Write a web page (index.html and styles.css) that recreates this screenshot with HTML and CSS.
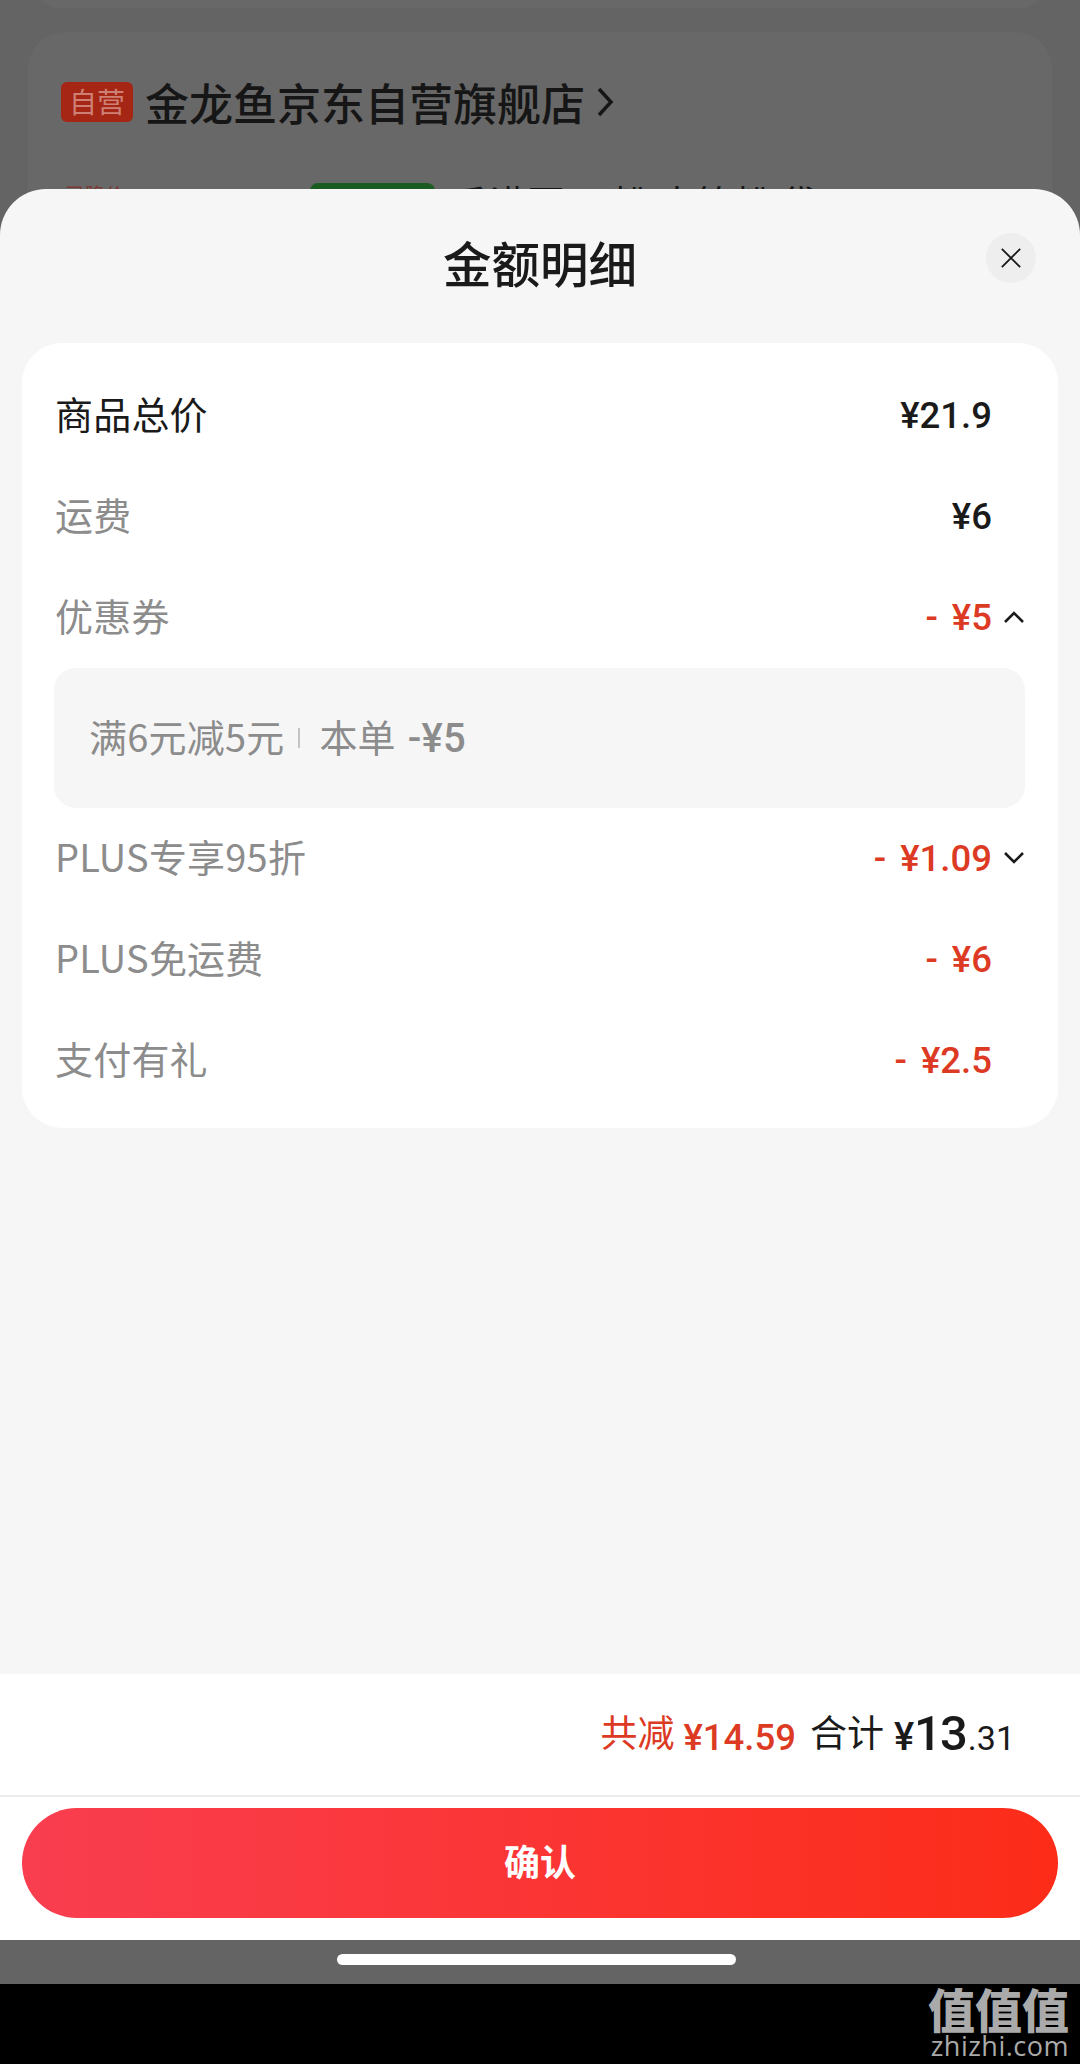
FILE: index.html
```html
<!DOCTYPE html>
<html lang="zh-CN">
<head>
  <meta charset="UTF-8">
  <title>金额明细</title>
  <meta name="viewport" content="width=device-width, initial-scale=1.0">
  <link rel="stylesheet" href="styles.css">
</head>
<body>
  <div class="screen">
    <!-- dimmed order page behind the sheet -->
    <div class="backdrop">
      <div class="bg-card bg-card-top"></div>
      <div class="bg-card">
        <div class="shop-row">
          <span class="shop-badge">自营</span>
          <span class="shop-name">金龙鱼京东自营旗舰店</span>
          <svg class="shop-arrow" viewBox="0 0 18 32"><path d="M3 3l12 13L3 29"/></svg>
        </div>
        <div class="goods-row">
          <span class="goods-tag">已降价</span>
          <span class="goods-green"></span>
          <span class="goods-name">香满园 面粉 中筋粉 袋</span>
        </div>
      </div>
    </div>

    <div class="sheet">
      <header class="sheet-head">
        <h1 class="sheet-title">金额明细</h1>
        <button class="close-btn">
          <svg viewBox="0 0 24 24"><path d="M2 2l20 20M22 2L2 22"/></svg>
        </button>
      </header>

      <section class="detail-card">
        <div class="row">
          <span class="row-label dark">商品总价</span>
          <span class="row-amount">¥21.9</span>
          <span class="row-arrow"></span>
        </div>
        <div class="row">
          <span class="row-label">运费</span>
          <span class="row-amount">¥6</span>
          <span class="row-arrow"></span>
        </div>
        <div class="row">
          <span class="row-label">优惠券</span>
          <span class="row-amount red">- ¥5</span>
          <svg class="row-arrow" viewBox="0 0 22 14"><path d="M2 12l9-9 9 9"/></svg>
        </div>
        <div class="coupon-box">
          <span>满6元减5元</span>
          <i class="coupon-sep"></i>
          <span>本单</span>
          <b class="coupon-off">-¥5</b>
        </div>
        <div class="row">
          <span class="row-label">PLUS专享95折</span>
          <span class="row-amount red">- ¥1.09</span>
          <svg class="row-arrow" viewBox="0 0 22 14"><path d="M2 2l9 9 9-9"/></svg>
        </div>
        <div class="row">
          <span class="row-label">PLUS免运费</span>
          <span class="row-amount red">- ¥6</span>
          <span class="row-arrow"></span>
        </div>
        <div class="row">
          <span class="row-label">支付有礼</span>
          <span class="row-amount red">- ¥2.5</span>
          <span class="row-arrow"></span>
        </div>
      </section>

      <footer class="sheet-foot">
        <div class="summary">
          <span class="sum-label red">共减</span>
          <span class="sum-off red">¥14.59</span>
          <span class="sum-label sum-total-label">合计</span>
          <span class="sum-total"><span class="yen">¥</span><span class="int">13</span><span class="dec">.31</span></span>
        </div>
        <div class="confirm-wrap">
          <button class="confirm-btn">确认</button>
        </div>
      </footer>
    </div>

    <div class="home-bar"></div>
  </div>

  <div class="watermark">
    <div class="wm-logo">值值值</div>
    <div class="wm-url">zhizhi.com</div>
  </div>
</body>
</html>
```

FILE: styles.css
```css
* {
  box-sizing: border-box;
}
body {
  margin: 0;
  background: #000;
  color: #1a1a1a;
  font-family: "Noto Sans CJK SC", "Noto Sans", sans-serif;
}
.screen {
  position: relative;
  height: 1984px;
  background: #646464;
  overflow: hidden;
}
.backdrop {
  display: flex;
  flex-direction: column;
  gap: 24px;
  padding: 0 28px;
  margin-top: -60px;
}
.bg-card {
  background: #686868;
  border-radius: 36px;
  padding: 0 33px;
}
.bg-card-top {
  height: 68px;
}
.shop-row {
  display: flex;
  align-items: center;
  height: 127px;
  padding-top: 13px;
}
.shop-badge {
  width: 72px;
  height: 40px;
  border-radius: 6px;
  background: #a52614;
  color: #cf8075;
  font-size: 28px;
  line-height: 38px;
  text-align: center;
}
.shop-name {
  margin-left: 12px;
  font-size: 44px;
  font-weight: 500;
  color: #161616;
  white-space: nowrap;
}
.shop-arrow {
  width: 18px;
  height: 32px;
  margin-left: 11px;
}
.shop-arrow path {
  fill: none;
  stroke: #161616;
  stroke-width: 3.5;
}
.goods-row {
  display: flex;
  align-items: flex-start;
  height: 120px;
  padding-top: 24px;
}
.goods-tag {
  width: 249px;
  margin-top: -3px;
  padding-left: 4px;
  font-size: 20px;
  color: #7c3a36;
}
.goods-green {
  width: 125px;
  height: 60px;
  border-radius: 8px;
  background: #1b5c22;
}
.goods-name {
  margin-left: 16px;
  font-size: 38px;
  line-height: 44px;
  margin-top: -3px;
  color: #161616;
}

/* bottom sheet */
.sheet {
  position: absolute;
  top: 189px;
  left: 0;
  right: 0;
  bottom: 44px;
  display: flex;
  flex-direction: column;
  background: #f6f6f6;
  border-radius: 46px 46px 0 0;
  overflow: hidden;
}
.sheet-head {
  position: relative;
  height: 154px;
  flex: none;
  display: flex;
  align-items: center;
  justify-content: center;
  padding-bottom: 8px;
}
.sheet-title {
  margin: 0;
  font-size: 48.5px;
  font-weight: 500;
  color: #1a1a1a;
}
.close-btn {
  position: absolute;
  top: 44px;
  right: 44px;
  width: 50px;
  height: 50px;
  padding: 14px;
  border: none;
  border-radius: 50%;
  background: #eeeeee;
}
.close-btn svg {
  display: block;
  width: 100%;
  height: 100%;
}
.close-btn path {
  fill: none;
  stroke: #1a1a1a;
  stroke-width: 2;
}

.detail-card {
  margin: 0 22px;
  padding: 22px 33px 17px 33px;
  background: #fff;
  border-radius: 40px;
}
.row {
  display: flex;
  align-items: center;
  height: 101px;
}
.row-label {
  flex: 1;
  padding-bottom: 6px;
  font-size: 38px;
  letter-spacing: .2px;
  color: #8c8c8c;
}
.row-label.dark {
  color: #1a1a1a;
}
.row-amount {
  font-family: Roboto, "Noto Sans", sans-serif;
  font-size: 36.5px;
  font-weight: 500;
  word-spacing: 5px;
  color: #1a1a1a;
}
.red {
  color: #dd3a24;
}
.row-amount.red {
  color: #dd3a24;
}
.row-arrow {
  width: 22px;
  height: 14px;
  margin-left: 11px;
  margin-bottom: 2px;
  flex: none;
}
.row-arrow path {
  fill: none;
  stroke: #1a1a1a;
  stroke-width: 2.6;
}
.coupon-box {
  display: flex;
  align-items: center;
  height: 140px;
  margin-left: -1px;
  padding: 0 0 6px 35px;
  background: #f6f6f6;
  border-radius: 22px;
  font-size: 38px;
  letter-spacing: .2px;
  color: #8c8c8c;
}
.coupon-sep {
  width: 2px;
  height: 20px;
  margin: 6px 19px 0 14px;
  background: #c4c4c4;
}
.coupon-off {
  margin: 6px 0 0 12px;
  font-family: Roboto, "Noto Sans", sans-serif;
  font-size: 40px;
  font-weight: 500;
}

.sheet-foot {
  margin-top: auto;
  background: #fff;
}
.summary {
  display: flex;
  align-items: baseline;
  justify-content: flex-end;
  height: 123px;
  padding: 31px 65px 0 0;
  border-bottom: 2px solid #ececec;
}
.sum-label {
  font-size: 37px;
  line-height: 44px;
  margin-top: 4px;
  align-self: flex-start;
}
.sum-off {
  margin-left: 9px;
  font-family: Roboto, "Noto Sans", sans-serif;
  font-size: 36.5px;
  font-weight: 500;
}
.sum-total-label {
  margin-left: 14px;
}
.sum-total {
  margin-left: 10px;
  font-family: Roboto, "Noto Sans", sans-serif;
  font-weight: 500;
}
.sum-total .yen {
  font-size: 38px;
}
.sum-total .int {
  font-size: 49px;
  letter-spacing: -2px;
}
.sum-total .dec {
  font-size: 34px;
  font-weight: 400;
  margin-left: 2px;
}
.confirm-wrap {
  padding: 11px 22px 22px;
}
.confirm-btn {
  display: block;
  width: 100%;
  height: 110px;
  padding: 0 0 6px;
  border: none;
  border-radius: 55px;
  background: linear-gradient(90deg, #f93e50, #fc2c18);
  color: #fff;
  font-family: inherit;
  font-size: 36px;
  font-weight: 700;
}

.home-bar {
  position: absolute;
  left: 337px;
  bottom: 19px;
  width: 399px;
  height: 11px;
  border-radius: 6px;
  background: #fff;
}

.watermark {
  height: 80px;
  padding-right: 11px;
  display: flex;
  flex-direction: column;
  align-items: flex-end;
  color: #aaa;
}
.wm-logo {
  font-size: 47px;
  font-weight: 900;
  line-height: 47px;
  white-space: nowrap;
}
.wm-url {
  width: 140px;
  font-family: "Open Sans", sans-serif;
  font-size: 27px;
  letter-spacing: .5px;
  line-height: 30px;
  text-align: right;
  white-space: nowrap;
}
```
